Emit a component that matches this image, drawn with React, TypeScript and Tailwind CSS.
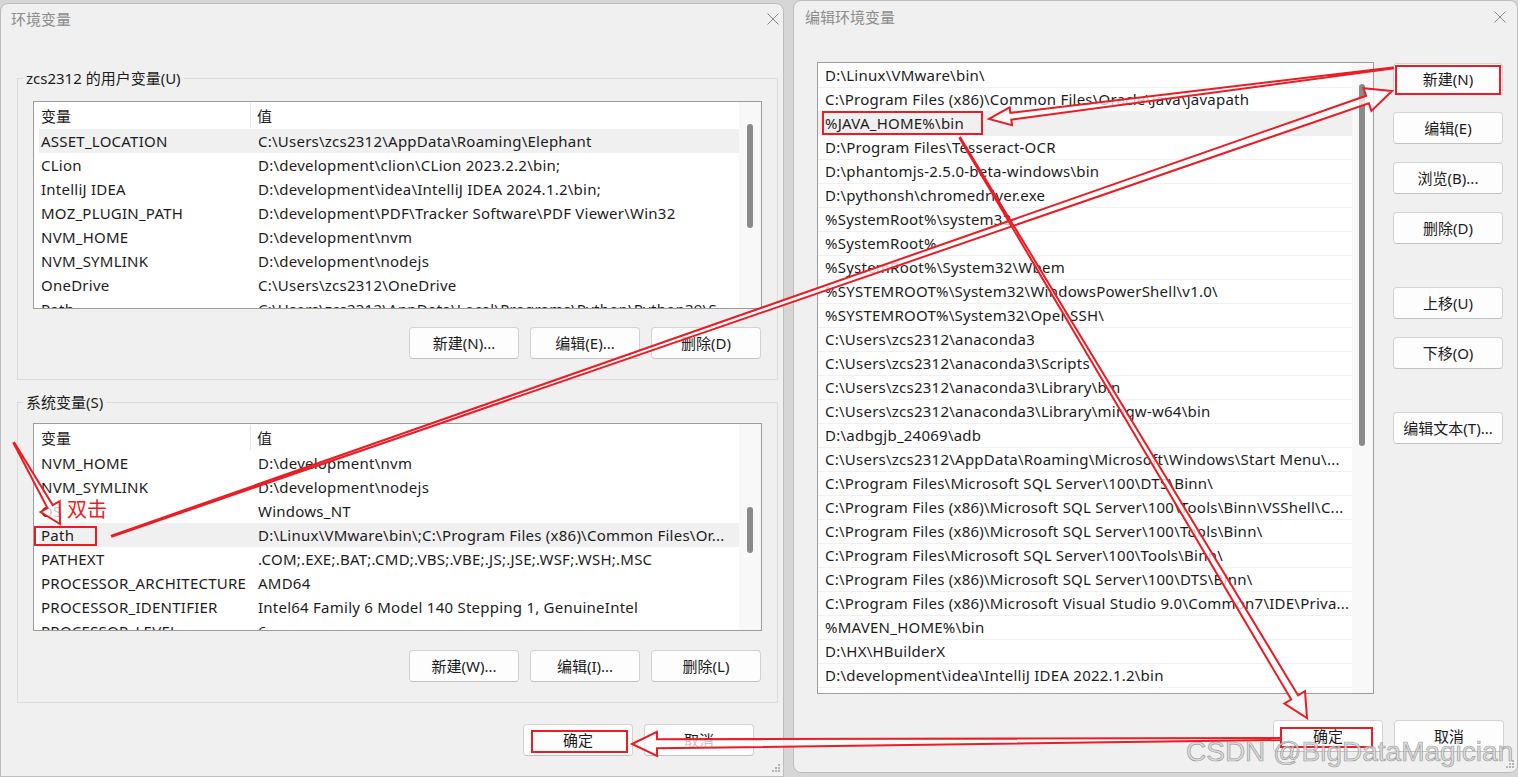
import React from "react";

type Row = [string, string];

const userRows: Row[] = [
  ["ASSET_LOCATION", "C:\\Users\\zcs2312\\AppData\\Roaming\\Elephant"],
  ["CLion", "D:\\development\\clion\\CLion 2023.2.2\\bin;"],
  ["IntelliJ IDEA", "D:\\development\\idea\\IntelliJ IDEA 2024.1.2\\bin;"],
  ["MOZ_PLUGIN_PATH", "D:\\development\\PDF\\Tracker Software\\PDF Viewer\\Win32"],
  ["NVM_HOME", "D:\\development\\nvm"],
  ["NVM_SYMLINK", "D:\\development\\nodejs"],
  ["OneDrive", "C:\\Users\\zcs2312\\OneDrive"],
  ["Path", "C:\\Users\\zcs2312\\AppData\\Local\\Programs\\Python\\Python39\\S..."],
];

const systemRows: Row[] = [
  ["NVM_HOME", "D:\\development\\nvm"],
  ["NVM_SYMLINK", "D:\\development\\nodejs"],
  ["OS", "Windows_NT"],
  ["Path", "D:\\Linux\\VMware\\bin\\;C:\\Program Files (x86)\\Common Files\\Or..."],
  ["PATHEXT", ".COM;.EXE;.BAT;.CMD;.VBS;.VBE;.JS;.JSE;.WSF;.WSH;.MSC"],
  ["PROCESSOR_ARCHITECTURE", "AMD64"],
  ["PROCESSOR_IDENTIFIER", "Intel64 Family 6 Model 140 Stepping 1, GenuineIntel"],
  ["PROCESSOR_LEVEL", "6"],
];

const pathRows = [
  "D:\\Linux\\VMware\\bin\\",
  "C:\\Program Files (x86)\\Common Files\\Oracle\\Java\\javapath",
  "%JAVA_HOME%\\bin",
  "D:\\Program Files\\Tesseract-OCR",
  "D:\\phantomjs-2.5.0-beta-windows\\bin",
  "D:\\pythonsh\\chromedriver.exe",
  "%SystemRoot%\\system32",
  "%SystemRoot%",
  "%SystemRoot%\\System32\\Wbem",
  "%SYSTEMROOT%\\System32\\WindowsPowerShell\\v1.0\\",
  "%SYSTEMROOT%\\System32\\OpenSSH\\",
  "C:\\Users\\zcs2312\\anaconda3",
  "C:\\Users\\zcs2312\\anaconda3\\Scripts",
  "C:\\Users\\zcs2312\\anaconda3\\Library\\bin",
  "C:\\Users\\zcs2312\\anaconda3\\Library\\mingw-w64\\bin",
  "D:\\adbgjb_24069\\adb",
  "C:\\Users\\zcs2312\\AppData\\Roaming\\Microsoft\\Windows\\Start Menu\\...",
  "C:\\Program Files\\Microsoft SQL Server\\100\\DTS\\Binn\\",
  "C:\\Program Files (x86)\\Microsoft SQL Server\\100\\Tools\\Binn\\VSShell\\C...",
  "C:\\Program Files (x86)\\Microsoft SQL Server\\100\\Tools\\Binn\\",
  "C:\\Program Files\\Microsoft SQL Server\\100\\Tools\\Binn\\",
  "C:\\Program Files (x86)\\Microsoft SQL Server\\100\\DTS\\Binn\\",
  "C:\\Program Files (x86)\\Microsoft Visual Studio 9.0\\Common7\\IDE\\Priva...",
  "%MAVEN_HOME%\\bin",
  "D:\\HX\\HBuilderX",
  "D:\\development\\idea\\IntelliJ IDEA 2022.1.2\\bin",
];

function CloseX() {
  return (
    <svg width="12" height="12" viewBox="0 0 12 12">
      <path d="M0.5 0.5 L11.5 11.5 M11.5 0.5 L0.5 11.5" stroke="#8a8a8a" strokeWidth="1" />
    </svg>
  );
}

function Grip() {
  return (
    <svg width="10" height="10" viewBox="0 0 10 10" className="absolute right-[2px] bottom-[3px]">
      {[
        [8, 2],
        [8, 5],
        [5, 5],
        [8, 8],
        [5, 8],
        [2, 8],
      ].map(([x, y]) => (
        <rect key={`${x}-${y}`} x={x - 1} y={y - 1} width="2" height="2" fill="#b5b5b5" />
      ))}
    </svg>
  );
}

function Btn({ label, className = "" }: { label: string; className?: string }) {
  return (
    <button
      className={`w-[110px] h-[32px] bg-[#fdfdfd] border border-[#d3d3d3] border-b-[#c2c2c2] rounded-[4px] text-[15px] text-[#1b1b1b] flex items-center justify-center ${className}`}
    >
      {label}
    </button>
  );
}

function VarList({
  rows,
  selected,
  className,
  thumb,
}: {
  rows: Row[];
  selected: number;
  className: string;
  thumb: string;
}) {
  return (
    <div className={`w-[729px] h-[208px] ml-[15px] border border-[#9c9c9c] bg-white flex overflow-hidden ${className}`}>
      <div className="flex-1 flex flex-col overflow-hidden">
        <div className="h-[27px] shrink-0 flex items-center">
          <div className="w-[217px] h-[25px] border-r border-[#e5e5e5] pl-[7px] pt-[2px] flex items-center">变量</div>
          <div className="pl-[6px] pt-[2px]">值</div>
        </div>
        {rows.map(([name, value], i) => (
          <div
            key={name}
            className={`ml-[5px] h-[24px] shrink-0 flex items-center whitespace-nowrap tracking-[0.24px] ${
              i === selected ? "bg-[#f0f0f0]" : ""
            }`}
          >
            <div className="w-[212px] shrink-0 pl-[2px] overflow-hidden">{name}</div>
            <div className="pl-[7px]">{value}</div>
          </div>
        ))}
      </div>
      <div className="w-[22px] shrink-0 bg-[#f8f8f8] flex flex-col">
        <div className={`ml-[8px] w-[6px] rounded-[3px] bg-[#8a8a8a] ${thumb}`} />
      </div>
    </div>
  );
}

function arrow(x1: number, y1: number, x2: number, y2: number, tailW: number, shaftW: number, headL: number, headW: number) {
  const len = Math.hypot(x2 - x1, y2 - y1);
  const ux = (x2 - x1) / len;
  const uy = (y2 - y1) / len;
  const nx = -uy;
  const ny = ux;
  const bx = x2 - ux * headL;
  const by = y2 - uy * headL;
  const pts = [
    [x1 + (nx * tailW) / 2, y1 + (ny * tailW) / 2],
    [bx + (nx * shaftW) / 2, by + (ny * shaftW) / 2],
    [bx + (nx * headW) / 2, by + (ny * headW) / 2],
    [x2, y2],
    [bx - (nx * headW) / 2, by - (ny * headW) / 2],
    [bx - (nx * shaftW) / 2, by - (ny * shaftW) / 2],
    [x1 - (nx * tailW) / 2, y1 - (ny * tailW) / 2],
  ];
  return pts.map(([x, y]) => `${x.toFixed(1)},${y.toFixed(1)}`).join(" ");
}

const arrows = [
  arrow(14, 443, 60, 524, 1, 6, 20, 22),
  arrow(112, 536, 1392, 91, 1, 8, 26, 24),
  arrow(1393, 68, 989, 119, 1, 7, 22, 18),
  arrow(960, 138, 1307, 718, 1, 8, 24, 24),
  arrow(1281, 739, 632, 744, 2, 9, 25, 24),
];

const boxes = [
  [35, 527, 61, 18],
  [823, 112, 159, 22],
  [1396, 66, 104, 28],
  [1281, 728, 91, 19],
  [532, 731, 95, 21],
];

export default function App() {
  return (
    <div className="relative w-[1518px] h-[777px] overflow-hidden bg-[#d6d6d6] flex items-start font-['Noto_Sans','Noto_Sans_CJK_SC',sans-serif] text-[15px] text-[#1c1c1c]">
      {/* 环境变量 */}
      <div className="relative mt-[3px] w-[784px] h-[774px] shrink-0 bg-[#f0f0f0] border border-[#bdbdbd] rounded-t-[8px] flex flex-col">
        <div className="h-[30px] flex items-center justify-between pl-[10px] pr-[4px] text-[#8c8c8c]">
          <span>环境变量</span>
          <CloseX />
        </div>
        <div className="pt-[34px] flex flex-col">
          <fieldset className="ml-[16px] w-[761px] border border-[#dcdcdc] pb-[20px]">
            <legend className="ml-[5px] px-[3px] leading-[20px]">zcs2312 的用户变量(U)</legend>
            <VarList rows={userRows} selected={0} className="mt-[13px]" thumb="mt-[22px] h-[104px]" />
            <div className="mt-[18px] flex justify-end gap-[11px] pr-[16px]">
              <Btn label="新建(N)..." />
              <Btn label="编辑(E)..." />
              <Btn label="删除(D)" />
            </div>
          </fieldset>
          <fieldset className="mt-[12px] ml-[16px] w-[761px] border border-[#dcdcdc] pb-[20px]">
            <legend className="ml-[5px] px-[3px] leading-[20px]">系统变量(S)</legend>
            <VarList rows={systemRows} selected={3} className="mt-[11px]" thumb="mt-[83px] h-[46px]" />
            <div className="mt-[19px] flex justify-end gap-[11px] pr-[16px]">
              <Btn label="新建(W)..." />
              <Btn label="编辑(I)..." />
              <Btn label="删除(L)" />
            </div>
          </fieldset>
          <div className="mt-[21px] flex justify-end gap-[11px] pr-[29px]">
            <Btn label="确定" />
            <Btn label="取消" />
          </div>
        </div>
        <Grip />
      </div>

      {/* 编辑环境变量 */}
      <div className="relative ml-[9px] w-[725px] h-[773px] shrink-0 bg-[#f0f0f0] border border-[#bdbdbd] rounded-[8px] flex flex-col">
        <div className="h-[32px] flex items-center justify-between pl-[11px] pr-[11px] text-[#8c8c8c]">
          <span>编辑环境变量</span>
          <CloseX />
        </div>
        <div className="mt-[29px] ml-[23px] flex items-start">
          <div className="w-[557px] h-[632px] border border-[#9c9c9c] bg-white flex overflow-hidden">
            <div className="flex-1 flex flex-col pt-[1px]">
              {pathRows.map((p, i) => (
                <div
                  key={p}
                  className={`h-[24px] shrink-0 border-b border-[#f0f0f0] pl-[7px] flex items-center whitespace-nowrap tracking-[0.24px] ${
                    i === 2 ? "bg-[#f0f0f0]" : ""
                  }`}
                >
                  {p}
                </div>
              ))}
            </div>
            <div className="w-[21px] shrink-0 bg-[#f8f8f8] flex flex-col">
              <div className="mt-[21px] ml-[7px] w-[6px] h-[362px] rounded-[3px] bg-[#8a8a8a]" />
            </div>
          </div>
          <div className="ml-[19px] flex flex-col">
            <Btn label="新建(N)" className="mt-[1px]" />
            <Btn label="编辑(E)" className="mt-[17px]" />
            <Btn label="浏览(B)..." className="mt-[18px]" />
            <Btn label="删除(D)" className="mt-[18px]" />
            <Btn label="上移(U)" className="mt-[43px]" />
            <Btn label="下移(O)" className="mt-[18px]" />
            <Btn label="编辑文本(T)..." className="mt-[43px]" />
          </div>
        </div>
        <div className="mt-[26px] flex justify-end gap-[11px] pr-[13px]">
          <Btn label="确定" />
          <Btn label="取消" />
        </div>
        <Grip />
      </div>

      {/* annotations */}
      <svg className="absolute inset-0 pointer-events-none" width="1518" height="777" viewBox="0 0 1518 777">
        {boxes.map(([x, y, w, h]) => (
          <rect key={`${x}-${y}`} x={x} y={y} width={w} height={h} fill="none" stroke="#ea1c24" strokeWidth="2" />
        ))}
        {arrows.map((pts, i) => (
          <polygon key={i} points={pts} fill="#ffffff" fillOpacity="0.75" stroke="#ea1c24" strokeWidth="2" strokeLinejoin="miter" />
        ))}
      </svg>
      <span className="absolute left-[67px] top-[496px] text-[20px] leading-[26px] text-[#ea1c24] font-['Noto_Sans_CJK_SC',sans-serif]">
        双击
      </span>
      <span className="absolute left-[1186px] top-[738px] text-[28px] leading-[28px] whitespace-nowrap font-['Liberation_Sans',Arial,sans-serif] text-[rgba(215,215,215,0.8)] [-webkit-text-stroke:0.7px_rgba(130,130,130,0.75)]">
        CSDN @BigDataMagician
      </span>
    </div>
  );
}
